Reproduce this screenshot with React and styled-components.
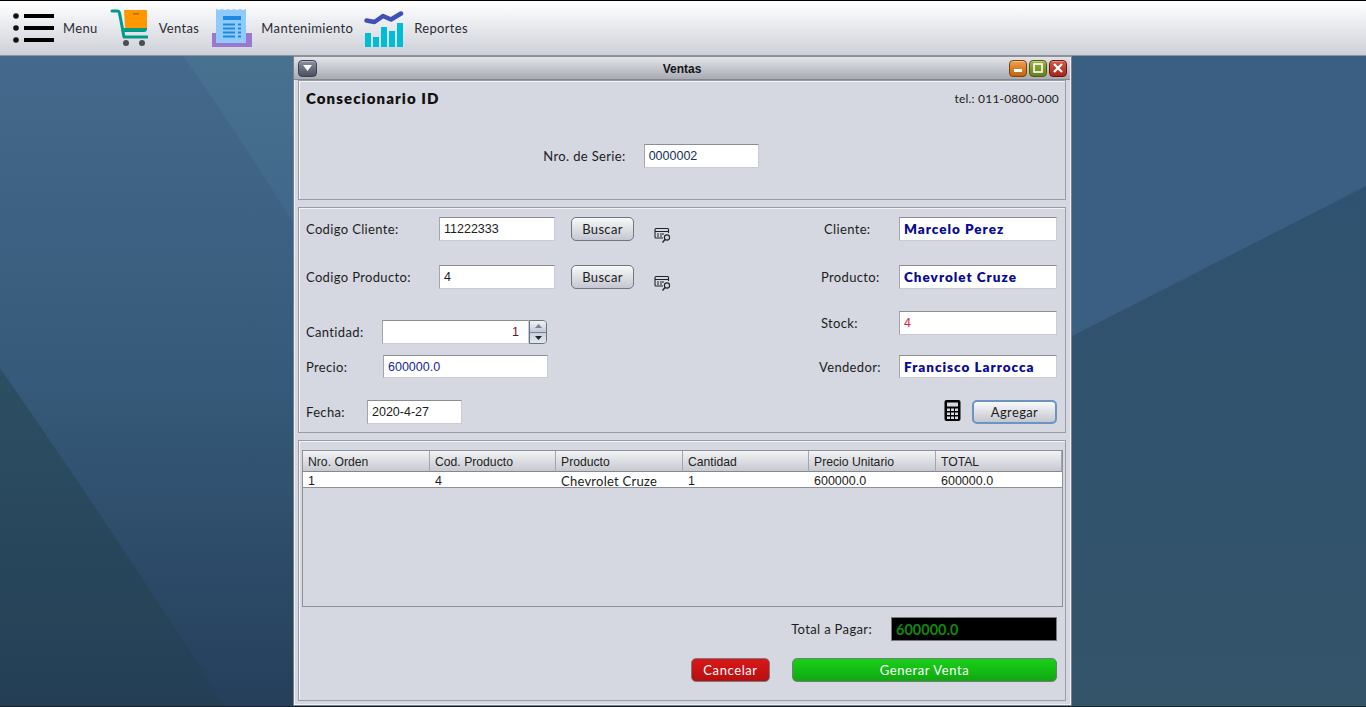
import React from 'react';
import styled, { createGlobalStyle } from 'styled-components';

const gothic = '"Lato", "Liberation Sans", sans-serif';
const arial = '"Liberation Sans", Arial, sans-serif';

const GlobalStyle = createGlobalStyle`
  html, body { margin: 0; padding: 0; height: 100%; overflow: hidden; }
  #root { height: 100%; }
  * { box-sizing: border-box; }
`;

const Page = styled.div`
  display: flex;
  flex-direction: column;
  height: 707px;
  font-family: ${gothic};
  font-size: 13px;
  letter-spacing: 0.35px;
  color: #1c1c22;
`;

const Toolbar = styled.div`
  display: flex;
  align-items: center;
  flex: none;
  height: 56px;
  padding-left: 11px;
  background: linear-gradient(#ffffff 0%, #f3f4f6 25%, #cdd0d8 100%);
  border-top: 1px solid #000;
  border-bottom: 1px solid #8f9299;
`;

const ToolItem = styled.div`
  display: flex;
  align-items: center;
  gap: ${p => p.$gap}px;
  margin-right: ${p => p.$after}px;
`;

const ToolLabel = styled.span`
  color: #2b2b33;
`;

const Desktop = styled.div`
  position: relative;
  flex: 1;
  display: flex;
  justify-content: center;
  background: #3a5e80;
  border-bottom: 1px solid #14202c;
  overflow: hidden;
`;

const Wallpaper = styled.svg`
  position: absolute;
  inset: 0;
  width: 100%;
  height: 100%;
`;

const Window = styled.div`
  position: relative;
  width: 779px;
  height: 650px;
  margin-right: 1px;
  padding: 0 5px 5px 4px;
  background: #d5d8e0;
  border: 1px solid #7d8087;
  border-top-color: #8d9097;
  box-shadow: inset 0 0 0 1px #eef0f3;
`;

const TitleBar = styled.div`
  display: flex;
  align-items: center;
  justify-content: space-between;
  height: 23px;
  margin: 0 -4px;
  padding: 0 3px 0 4px;
  background: linear-gradient(#e2e4e8, #a8abb3);
  border-bottom: 1px solid #85888f;
`;

const Title = styled.div`
  font-family: ${arial};
  font-size: 12px;
  font-weight: bold;
  letter-spacing: 0;
  color: #15151a;
  transform: translate(19px, 1px);
`;

const WinButtons = styled.div`
  display: flex;
  gap: 2px;
`;

const WinButton = styled.div`
  display: flex;
  align-items: center;
  justify-content: center;
  width: ${p => p.$w || 18}px;
  height: 17px;
  border-radius: 4px;
  border: 1px solid ${p => p.$edge};
  background: linear-gradient(${p => p.$light}, ${p => p.$dark});
  box-shadow: inset 0 1px 0 rgba(255,255,255,.35);
`;

const Panel = styled.div`
  position: relative;
  height: ${p => p.$h}px;
  margin-bottom: ${p => p.$after || 0}px;
  background: #d5d8e0;
  border: 1px solid #9a9da4;
  box-shadow: inset 1px 1px 0 #f2f3f5;
`;

const HeaderRow = styled.div`
  display: flex;
  justify-content: space-between;
  align-items: center;
  padding: 8px 6px 0 7px;
`;

const Brand = styled.div`
  font-size: 15px;
  font-weight: 800;
  letter-spacing: 1.1px;
  color: #111;
`;

const Phone = styled.div`
  font-size: 12px;
  letter-spacing: 0.2px;
`;

const SerialRow = styled.div`
  display: flex;
  align-items: center;
  justify-content: center;
  margin-top: 37px;
  padding-right: 62px;
  gap: 18px;
`;

const FormBody = styled.div`
  display: flex;
  justify-content: space-between;
  padding: 9px 8px 0 7px;
`;

const Column = styled.div`
  display: flex;
  flex-direction: column;
  width: ${p => p.$w}px;
`;

const Row = styled.div`
  display: flex;
  align-items: center;
  height: ${p => p.$h || 24}px;
  margin-top: ${p => p.$top || 0}px;
`;

const Label = styled.div`
  flex: none;
  width: ${p => p.$w}px;
  padding-left: ${p => p.$indent || 0}px;
  white-space: nowrap;
`;

const Field = styled.div`
  display: flex;
  align-items: center;
  flex: none;
  width: ${p => p.$w}px;
  height: ${p => p.$h || 24}px;
  padding: 0 4px;
  background: #fff;
  border: 1px solid #c9ccd2;
  border-top: 1px solid #8a8d93;
  border-left: 1px solid #a2a5ab;
  color: ${p => p.$color || '#1c1c22'};
  font-family: ${p => (p.$bold ? gothic : arial)};
  font-size: ${p => (p.$bold ? 13.5 : 12.5)}px;
  font-weight: ${p => (p.$bold ? 800 : 400)};
  letter-spacing: ${p => (p.$bold ? '1px' : '0')};
`;

const Spinner = styled.div`
  display: flex;
  flex: none;
  width: 165px;
  height: 24px;
`;

const SpinnerValue = styled(Field)`
  justify-content: flex-end;
  width: 147px;
  padding-right: 9px;
  color: #6a1030;
`;

const SpinnerArrows = styled.div`
  display: flex;
  flex-direction: column;
  width: 18px;
  border: 1px solid #6f7278;
  border-radius: 0 4px 4px 0;
  overflow: hidden;
`;

const SpinnerArrow = styled.div`
  flex: 1;
  display: flex;
  align-items: center;
  justify-content: center;
  background: ${p => p.$down ? 'linear-gradient(#c5d2e0, #e4e8ee)' : 'linear-gradient(#f1f3f6, #bccadb)'};
  border-top: ${p => p.$down ? '1px solid #7c8088' : 'none'};
  font-size: 0;
`;

const PillButton = styled.div`
  display: flex;
  align-items: center;
  justify-content: center;
  flex: none;
  width: ${p => p.$w}px;
  height: 24px;
  margin-left: ${p => p.$left || 0}px;
  border-radius: 5px;
  border: ${p => p.$focus ? '2px solid #6d93c0' : '1px solid #73767d'};
  background: linear-gradient(#f8f9fa, #c4c7cf);
  color: #1c1c22;
`;

const FindIcon = styled.svg`
  flex: none;
  width: 17px;
  height: 17px;
  margin: 12px 0 0 20px;
`;

const CalcIcon = styled.svg`
  flex: none;
  width: 17px;
  height: 21px;
  margin: -4px 11px 0 auto;
`;

const TableWrap = styled.div`
  margin: 9px 2px 0 3px;
  height: 157px;
  border: 1px solid #8e9198;
  background: #d5d8e0;
`;

const TableGrid = styled.div`
  display: grid;
  grid-template-columns: 127px 126px 127px 126px 127px 126px;
`;

const HeadCell = styled.div`
  display: flex;
  align-items: center;
  height: 21px;
  padding: 1px 0 0 5px;
  background: linear-gradient(#f2f3f5, #c6c9d0);
  border-right: 1px solid #a2a5ab;
  border-bottom: 1px solid #85888f;
  font-family: ${arial};
  font-size: 12.2px;
  letter-spacing: 0;
  color: #1d1d22;
`;

const BodyCell = styled.div`
  display: flex;
  align-items: center;
  height: 16px;
  padding: 3px 0 0 5px;
  background: #fff;
  border-bottom: 1px solid #8e9198;
  font-family: ${p => (p.$text ? gothic : arial)};
  font-size: ${p => (p.$text ? 13 : 12.5)}px;
  letter-spacing: ${p => (p.$text ? '0.25px' : '0')};
  line-height: 1;
  white-space: nowrap;
  overflow: hidden;
`;

const TotalRow = styled.div`
  display: flex;
  align-items: center;
  justify-content: flex-end;
  gap: 19px;
  margin-top: 10px;
  padding-right: 8px;
`;

const TotalValue = styled(Field)`
  width: 166px;
  background: #000;
  border: 1px solid #77797e;
  color: #0f8a0f;
  font-family: ${gothic};
  font-size: 14.5px;
  font-weight: 700;
  letter-spacing: 0;
`;

const ActionRow = styled.div`
  display: flex;
  justify-content: flex-end;
  gap: 22px;
  margin-top: 17px;
  padding-right: 8px;
`;

const ActionButton = styled.div`
  display: flex;
  align-items: center;
  justify-content: center;
  width: ${p => p.$w}px;
  height: 24px;
  border-radius: 5px;
  border: 1px solid #77797e;
  background: ${p => p.$bg};
  color: #fff;
  letter-spacing: 0.6px;
`;

const columns = ['Nro. Orden', 'Cod. Producto', 'Producto', 'Cantidad', 'Precio Unitario', 'TOTAL'];
const sale = ['1', '4', 'Chevrolet Cruze', '1', '600000.0', '600000.0'];

const MenuIcon = () => (
  <svg width="44" height="32" viewBox="0 0 44 32">
    <circle cx="5" cy="4" r="2.8" fill="#111" />
    <circle cx="5" cy="16" r="2.8" fill="#111" />
    <circle cx="5" cy="28" r="2.8" fill="#111" />
    <rect x="13" y="2" width="30" height="4" fill="#000" />
    <rect x="13" y="14" width="30" height="4" fill="#000" />
    <rect x="13" y="26" width="30" height="4" fill="#000" />
  </svg>
);

const CartIcon = () => (
  <svg width="38" height="38" viewBox="0 0 38 38">
    <path d="M14 1h23v20H18q-3 0-3-3z" fill="#ff9800" />
    <rect x="23" y="4" width="6" height="1.5" fill="#b36b00" />
    <path d="M2 2h5q2 0 2.500 2l4.500 24h23" fill="none" stroke="#009a88" strokeWidth="3" strokeLinecap="round" strokeLinejoin="round" />
    <path d="M11 19h26v1q0 3-3 3H12z" fill="#009a88" />
    <circle cx="16" cy="34" r="3" fill="#4a4f4f" />
    <circle cx="32" cy="34" r="3" fill="#4a4f4f" />
  </svg>
);

const ReceiptIcon = () => (
  <svg width="40" height="40" viewBox="0 0 40 40">
    <rect x="0" y="25" width="40" height="14" fill="#9a78d0" />
    <path d="M4 1l3 1 3-1 3 1 3-1 3 1 3-1 3 1 3-1 3 1 3-1v34H4z" fill="#90caf9" />
    <rect x="11" y="8" width="18" height="4" fill="#1e88e5" />
    <path d="M11 16.500h12M26 16.500h3M11 20.500h12M26 20.500h3M11 24.500h12M26 24.500h3M11 28.500h12M26 28.500h3" stroke="#1e88e5" strokeWidth="1.800" />
  </svg>
);

const ChartIcon = () => (
  <svg width="40" height="37" viewBox="0 0 40 37">
    <g fill="#00bcd4">
      <rect x="1" y="23" width="6" height="14" />
      <rect x="9" y="27" width="6" height="10" />
      <rect x="17" y="17" width="6" height="20" />
      <rect x="25" y="21" width="6" height="16" />
      <rect x="33" y="13" width="6" height="24" />
    </g>
    <path d="M2.500 10.500l8 1.500 8.500-6 8 3.500 10-6" fill="none" stroke="#3f51b5" strokeWidth="4.500" strokeLinecap="round" strokeLinejoin="round" />
  </svg>
);

const Find = () => (
  <FindIcon viewBox="0 0 17 17">
    <path d="M14.500 6V2.500a1 1 0 0 0-1-1H2a1 1 0 0 0-1 1V10a1 1 0 0 0 1 1h7" fill="none" stroke="#222" strokeWidth="1.100" />
    <path d="M1 4.500h13.500M3 7h2M6 7h4M3 9h2M6 9h2" stroke="#222" strokeWidth="1" />
    <circle cx="13" cy="10.500" r="2.600" fill="none" stroke="#222" strokeWidth="1.100" />
    <path d="M11 12.500l-2.500 3" stroke="#222" strokeWidth="1.300" />
  </FindIcon>
);

const Calculator = () => (
  <CalcIcon viewBox="0 0 17 21">
    <rect x="0.500" y="0" width="16" height="21" rx="2" fill="#000" />
    <rect x="3" y="2.500" width="11" height="4" fill="#d5d8e0" />
    <path d="M3 8.500h3v2.500H3zM7 8.500h3v2.500H7zM11 8.500h3v2.500h-3zM3 12.500h3V15H3zM7 12.500h3V15H7zM11 12.500h3V15h-3zM3 16.500h3V19H3zM7 16.500h3V19H7zM11 16.500h3V19h-3z" fill="#d5d8e0" />
  </CalcIcon>
);

const App = () => (
  <Page>
    <GlobalStyle />
    <Toolbar>
      <ToolItem $gap={8} $after={12}><MenuIcon /><ToolLabel>Menu</ToolLabel></ToolItem>
      <ToolItem $gap={11} $after={13}><CartIcon /><ToolLabel>Ventas</ToolLabel></ToolItem>
      <ToolItem $gap={9} $after={11}><ReceiptIcon /><ToolLabel>Mantenimiento</ToolLabel></ToolItem>
      <ToolItem $gap={10} $after={0}><ChartIcon /><ToolLabel>Reportes</ToolLabel></ToolItem>
    </Toolbar>
    <Desktop>
      <Wallpaper viewBox="0 0 1366 650" preserveAspectRatio="none">
        <defs>
          <linearGradient id="leftSky" x1="0" y1="0" x2="0" y2="1">
            <stop offset="0" stopColor="#45698c" />
            <stop offset="0.5" stopColor="#365a79" />
            <stop offset="1" stopColor="#253f5b" />
          </linearGradient>
          <linearGradient id="topWedge" x1="0" y1="0" x2="0" y2="1">
            <stop offset="0" stopColor="#48708f" />
            <stop offset="1" stopColor="#3f678a" />
          </linearGradient>
          <linearGradient id="leftWedge" x1="0" y1="0" x2="0" y2="1">
            <stop offset="0" stopColor="#2d4f63" />
            <stop offset="1" stopColor="#243f55" />
          </linearGradient>
          <linearGradient id="rightLow" x1="0" y1="0" x2="0" y2="1">
            <stop offset="0" stopColor="#2f5270" />
            <stop offset="1" stopColor="#34546a" />
          </linearGradient>
        </defs>
        <rect x="0" width="700" height="650" fill="url(#leftSky)" />
        <path d="M183 0Q240 80 300 178V0z" fill="url(#topWedge)" />
        <path d="M0 312Q110 470 225 650H0z" fill="url(#leftWedge)" />
        <rect x="700" width="666" height="650" fill="#3b5f82" />
        <path d="M1072 280L1366 130V650H1072z" fill="url(#rightLow)" />
      </Wallpaper>
      <Window>
        <TitleBar>
          <WinButton $w={19} $edge="#3e4350" $light="#8b90a0" $dark="#4a5060">
            <svg width="9" height="6" viewBox="0 0 9 6"><path d="M0 0h9L4.500 6z" fill="#fff" /></svg>
          </WinButton>
          <Title>Ventas</Title>
          <WinButtons>
            <WinButton $edge="#7f4408" $light="#eda04c" $dark="#c4620c">
              <svg width="8" height="8" viewBox="0 0 8 8"><rect y="5" width="8" height="3" fill="#fff" /></svg>
            </WinButton>
            <WinButton $edge="#4d5d10" $light="#a0b040" $dark="#66801a">
              <svg width="10" height="10" viewBox="0 0 10 10"><rect x="1" y="1" width="8" height="8" fill="none" stroke="#fff" strokeWidth="1.600" /></svg>
            </WinButton>
            <WinButton $edge="#6d1610" $light="#d05a48" $dark="#a8241a">
              <svg width="10" height="10" viewBox="0 0 10 10"><path d="M1 1l8 8M9 1l-8 8" stroke="#fff" strokeWidth="2.200" /></svg>
            </WinButton>
          </WinButtons>
        </TitleBar>
        <Panel $h={120} $after={7}>
          <HeaderRow>
            <Brand>Consecionario ID</Brand>
            <Phone>tel.: 011-0800-000</Phone>
          </HeaderRow>
          <SerialRow>
            <div>Nro. de Serie:</div>
            <Field $w={115} $color="#12305a">0000002</Field>
          </SerialRow>
        </Panel>
        <Panel $h={226} $after={7}>
          <FormBody>
            <Column $w={400}>
              <Row>
                <Label $w={133}>Codigo Cliente:</Label>
                <Field $w={116}>11222333</Field>
                <PillButton $w={63} $left={16}>Buscar</PillButton>
                <Find />
              </Row>
              <Row $top={24}>
                <Label $w={133}>Codigo Producto:</Label>
                <Field $w={116}>4</Field>
                <PillButton $w={63} $left={16}>Buscar</PillButton>
                <Find />
              </Row>
              <Row $top={31}>
                <Label $w={76}>Cantidad:</Label>
                <Spinner>
                  <SpinnerValue>1</SpinnerValue>
                  <SpinnerArrows>
                    <SpinnerArrow>
                      <svg width="7" height="4" viewBox="0 0 7 4"><path d="M3.500 0L7 4H0z" fill="#7d8088" /></svg>
                    </SpinnerArrow>
                    <SpinnerArrow $down>
                      <svg width="7" height="4" viewBox="0 0 7 4"><path d="M0 0h7L3.500 4z" fill="#222" /></svg>
                    </SpinnerArrow>
                  </SpinnerArrows>
                </Spinner>
              </Row>
              <Row $top={11} $h={23}>
                <Label $w={77}>Precio:</Label>
                <Field $w={165} $h={23} $color="#141fa0">600000.0</Field>
              </Row>
              <Row $top={22}>
                <Label $w={61}>Fecha:</Label>
                <Field $w={95}>2020-4-27</Field>
              </Row>
            </Column>
            <Column $w={238}>
              <Row>
                <Label $w={80} $indent={5}>Cliente:</Label>
                <Field $w={158} $bold $color="#0a0a96">Marcelo Perez</Field>
              </Row>
              <Row $top={24}>
                <Label $w={80} $indent={2}>Producto:</Label>
                <Field $w={158} $bold $color="#0a0a96">Chevrolet Cruze</Field>
              </Row>
              <Row $top={22}>
                <Label $w={80} $indent={2}>Stock:</Label>
                <Field $w={158} $color="#e0203c">4</Field>
              </Row>
              <Row $top={20} $h={23}>
                <Label $w={80}>Vendedor:</Label>
                <Field $w={158} $h={23} $bold $color="#0a0a96">Francisco Larrocca</Field>
              </Row>
              <Row $top={22}>
                <Calculator />
                <PillButton $w={85} $focus>Agregar</PillButton>
              </Row>
            </Column>
          </FormBody>
        </Panel>
        <Panel $h={261}>
          <TableWrap>
            <TableGrid>
              {columns.map(c => <HeadCell key={c}>{c}</HeadCell>)}
              {sale.map((c, i) => <BodyCell key={i} $text={i === 2}>{c}</BodyCell>)}
            </TableGrid>
          </TableWrap>
          <TotalRow>
            <div>Total a Pagar:</div>
            <TotalValue $bold>600000.0</TotalValue>
          </TotalRow>
          <ActionRow>
            <ActionButton $w={79} $bg="linear-gradient(#d81818, #b80f10)">Cancelar</ActionButton>
            <ActionButton $w={265} $bg="linear-gradient(#18d018, #10a810)">Generar Venta</ActionButton>
          </ActionRow>
        </Panel>
      </Window>
    </Desktop>
  </Page>
);

export default App;
